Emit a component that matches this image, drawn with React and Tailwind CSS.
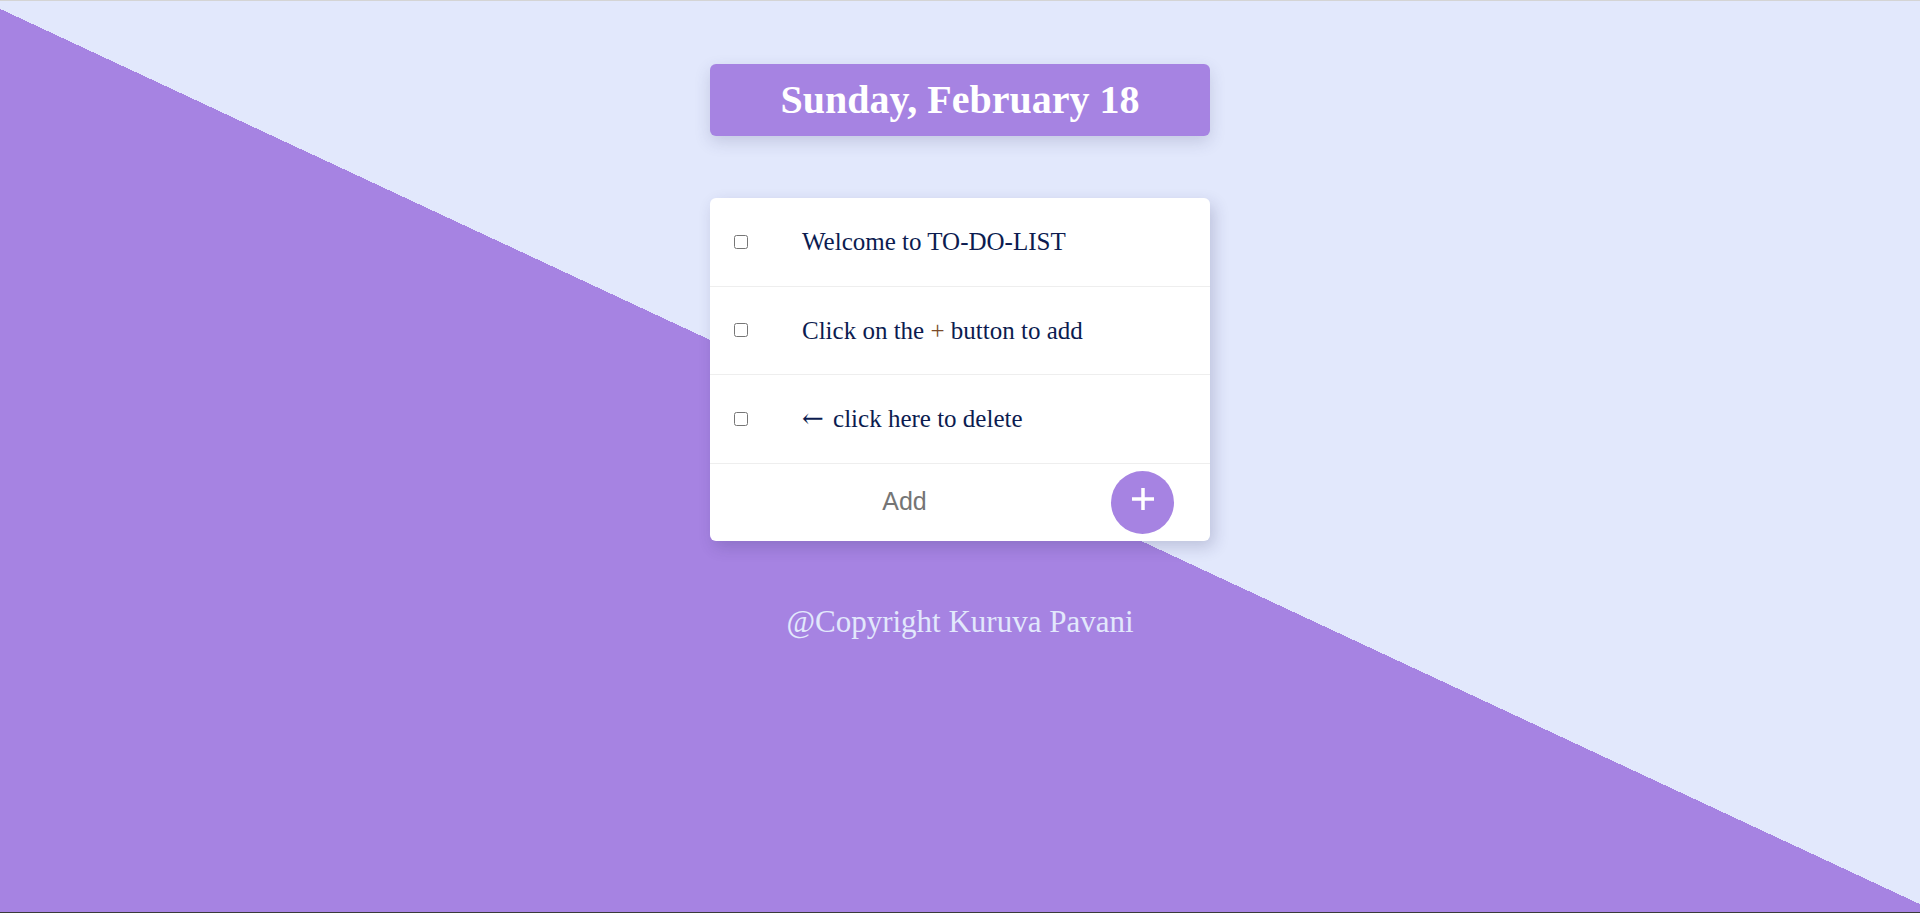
import React from "react";

const todos = [
  { id: 1, text: "Welcome to TO-DO-LIST" },
  {
    id: 2,
    text: (
      <>
        Click on the <span className="text-[#7a4a2a]">+</span> button to add
      </>
    ),
  },
  {
    id: 3,
    text: (
      <>
        <span className="font-['DejaVu_Serif',serif] text-[26px] mr-[3px]">←</span> click here to delete
      </>
    ),
  },
];

function TodoRow({ item }) {
  return (
    <div className="flex items-center h-[88.5px] border-b border-[#eeeeee] pl-[24px]">
      <input type="checkbox" className="m-0 w-[14px] h-[14px]" />
      <span className="ml-[54px] text-[25px] text-[#0c1c50] font-['Liberation_Serif',serif]">
        {item.text}
      </span>
    </div>
  );
}

export default function App() {
  return (
    <div className="h-[913px] w-full overflow-hidden border-t border-[#d4d4d4] border-b border-b-[#3a3a3a] bg-[linear-gradient(205deg,#e2e8fc_50%,#a683e2_50%)] font-['Liberation_Serif',serif]">
      <div className="flex flex-col items-center pt-[63px]">
        <div className="w-[500px] h-[72px] rounded-md bg-[#a683e2] flex items-center justify-center shadow-[0_6px_16px_rgba(60,60,110,0.18)]">
          <h1 className="text-[40px] font-bold text-white leading-none">Sunday, February 18</h1>
        </div>

        <div className="mt-[62px] w-[500px] bg-white rounded-md shadow-[4px_6px_16px_rgba(40,40,90,0.2)]">
          {todos.map((item) => (
            <TodoRow key={item.id} item={item} />
          ))}
          <div className="flex items-center h-[77px]">
            <input
              type="text"
              placeholder="Add"
              className="flex-1 min-w-0 text-center text-[25px] font-['Liberation_Sans',sans-serif] outline-none placeholder:text-[#757575] bg-transparent"
            />
            <button className="ml-3 mr-9 w-[63px] h-[63px] rounded-full bg-[#a683e2] flex items-center justify-center shrink-0">
              <svg width="24" height="24" viewBox="0 0 24 24" className="mb-[6px]">
                <path d="M12 1v22M1 12h22" stroke="white" strokeWidth="3.5" />
              </svg>
            </button>
          </div>
        </div>

        <p className="mt-[58px] text-[31px] text-[#e2e8fc]">@Copyright Kuruva Pavani</p>
      </div>
    </div>
  );
}
